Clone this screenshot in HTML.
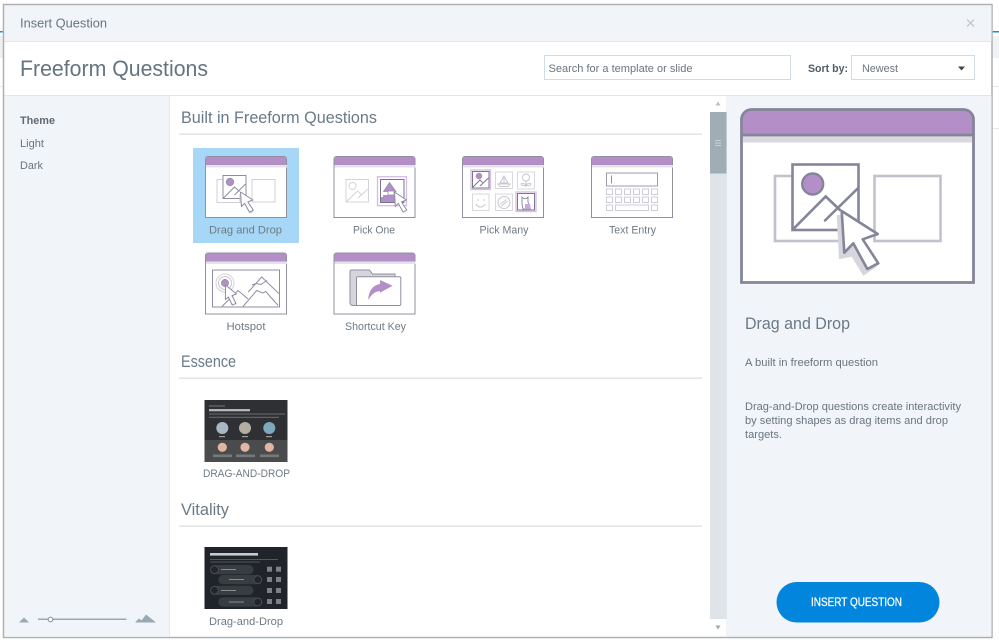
<!DOCTYPE html>
<html><head><meta charset="utf-8"><title>Insert Question</title>
<style>
html,body{margin:0;padding:0;background:#fff;width:999px;height:644px;overflow:hidden}
svg{display:block}
text{font-family:"Liberation Sans",sans-serif;fill:#69767f;font-size:11px}
.l{font-size:11px;fill:#6e7a84}
.h{font-size:16.5px;fill:#6a7a86}
</style></head><body>
<svg width="999" height="644" viewBox="0 0 999 644" xmlns="http://www.w3.org/2000/svg">
<defs>
<filter id="b" x="-5%" y="-5%" width="110%" height="110%"><feGaussianBlur stdDeviation="0.35"/></filter>
<g id="frame">
  <path d="M0.5 61.5V3a2.500 2.500 0 0 1 2.500-2.500h76a2.500 2.500 0 0 1 2.500 2.500V61.5Z" fill="#fff" stroke="#92909f" stroke-width="1"/>
  <rect x="1" y="9" width="81" height="2.500" fill="#e4e3e8"/>
  <path d="M1 9V3a2 2 0 0 1 2-2h76a2 2 0 0 1 2 2V9Z" fill="#b48fc7"/>
</g>
<g id="dd">
  <path d="M1.500 175V12a10 10 0 0 1 10-10h212a10 10 0 0 1 10 10V175Z" fill="#fff"/>
  <rect x="3" y="27" width="229" height="8" fill="#d9d9df"/>
  <path d="M1.500 27V12a10 10 0 0 1 10-10h212a10 10 0 0 1 10 10V27Z" fill="#b48fc7"/>
  <path d="M1.500 175V12a10 10 0 0 1 10-10h212a10 10 0 0 1 10 10V175ZM1.500 27.500H233.500" fill="none" stroke="#848599" stroke-width="2.800"/>
  <rect x="35" y="68.500" width="65" height="65" fill="none" stroke="#c2c2cc" stroke-width="2.600"/>
  <rect x="134.500" y="68.500" width="66" height="65" fill="none" stroke="#c2c2cc" stroke-width="2.600"/>
  <rect x="52.500" y="57" width="66" height="65.500" fill="#fff" stroke="#848599" stroke-width="2.600"/>
  <circle cx="72.700" cy="76.500" r="10.500" fill="#b48fc7" stroke="#848599" stroke-width="2.400"/>
  <path d="M53 121.800L85.700 89 100 102.500M85 113L118 80.700" fill="none" stroke="#848599" stroke-width="2.600" stroke-linecap="round"/>
  <path d="M96.700 107.500L102 107.500 105 145 113.300 135.800 127.300 161.500 138.300 158.200 123.300 168.200 111.700 149.200 99 151.800Z" fill="#d6d6dc"/>
  <path d="M101.700 103.500l36 23-15 5.300 15.600 24-11 5.700-14-25.700-9 9.400Z" fill="#fff" stroke="#848599" stroke-width="2.600" stroke-linejoin="round"/>
</g>
</defs>

<!-- outside page -->
<rect x="0" y="31" width="4" height="1.500" fill="#1b8fdc"/>
<rect x="992" y="31" width="7" height="1.500" fill="#1b8fdc"/>
<rect x="0" y="36" width="3" height="22" fill="#eef0f2"/>
<rect x="992" y="36" width="7" height="22" fill="#f1f2f4"/>
<rect x="992" y="86" width="7" height="1" fill="#e8e9eb"/>
<rect x="992" y="128" width="7" height="1" fill="#e8e9eb"/>
<rect x="0" y="86" width="3" height="1" fill="#e8e9eb"/>

<!-- dialog -->
<rect x="3.500" y="4.500" width="988.500" height="633" fill="#fff" stroke="#aeb0b1" stroke-width="1.500"/>
<rect x="4.500" y="5.500" width="987" height="36" fill="#f1f4f8"/>
<rect x="4.500" y="41" width="987" height="1" fill="#dfe6ec"/>
<rect x="4.500" y="95" width="987" height="1" fill="#dfe6ec"/>
<rect x="4.500" y="96" width="165" height="540" fill="#f1f4f8"/>
<rect x="169" y="96" width="1" height="540" fill="#e2e8ee"/>
<rect x="727" y="96" width="264.500" height="540.500" fill="#f1f4f8"/>
<rect x="726" y="96" width="1" height="540" fill="#e2e8ee"/>

<text x="20" y="27.500" style="font-size:13px" textLength="87" lengthAdjust="spacingAndGlyphs">Insert Question</text>
<path d="M967 19.500l7 7M974 19.500l-7 7" stroke="#c3c8cc" stroke-width="1.300" fill="none"/>
<text x="20" y="76" style="font-size:22.500px;fill:#64757f" textLength="188" lengthAdjust="spacingAndGlyphs">Freeform Questions</text>

<!-- search -->
<rect x="544.500" y="55.500" width="246" height="24" fill="#fff" stroke="#cfdbe5"/>
<text x="548.500" y="72" textLength="144" lengthAdjust="spacingAndGlyphs">Search for a template or slide</text>
<text x="808" y="72" style="fill:#4f5d67;font-weight:bold" textLength="40" lengthAdjust="spacingAndGlyphs">Sort by:</text>
<rect x="851.500" y="55.500" width="123" height="24" fill="#fff" stroke="#cfdbe5"/>
<text x="862" y="72" textLength="36" lengthAdjust="spacingAndGlyphs">Newest</text>
<path d="M958 66.500h7l-3.500 4Z" fill="#3d464c"/>

<!-- sidebar -->
<text x="20" y="124" style="font-weight:bold;fill:#5e6b75" textLength="35" lengthAdjust="spacingAndGlyphs">Theme</text>
<text x="20" y="147" textLength="24" lengthAdjust="spacingAndGlyphs">Light</text>
<text x="20" y="169" textLength="23" lengthAdjust="spacingAndGlyphs">Dark</text>
<path d="M19 622.500l5-5 5 5Z" fill="#9ba8b2"/>
<rect x="38" y="618.500" width="88.500" height="1.500" fill="#9ba8b2"/>
<circle cx="50.500" cy="619.500" r="2.300" fill="#fff" stroke="#8f9da8" stroke-width="1.200"/>
<path d="M135 622.500l4-4 2.500 2 4.500-6 10 8Z" fill="#9ba8b2"/>

<!-- scrollbar -->
<rect x="710" y="96" width="16.500" height="540" fill="#dfe4e9"/>
<rect x="710" y="96" width="16.500" height="16" fill="#fff"/>
<path d="M715.500 105.500l2.500-4 2.500 4Z" fill="#b5bfc6"/>
<rect x="710" y="112" width="16.500" height="61.500" fill="#a1adb4"/>
<path d="M715 140.500h6M715 143h6M715 145.500h6" stroke="#c9d1d6" stroke-width="1"/>
<rect x="710" y="619" width="16.500" height="17" fill="#fff"/>
<path d="M715.500 625.500h5l-2.500 4Z" fill="#9ba8b2"/>

<!-- sections -->
<text class="h" x="181" y="123" textLength="196" lengthAdjust="spacingAndGlyphs">Built in Freeform Questions</text>
<rect x="179" y="133.500" width="523" height="1.300" fill="#dedfe0"/>
<text class="h" x="181" y="367" textLength="55" lengthAdjust="spacingAndGlyphs">Essence</text>
<rect x="179" y="377.500" width="523" height="1.300" fill="#dedfe0"/>
<text class="h" x="181" y="515" textLength="48" lengthAdjust="spacingAndGlyphs">Vitality</text>
<rect x="179" y="525.500" width="523" height="1.300" fill="#dedfe0"/>

<!-- Drag and drop tile -->
<rect x="193" y="148" width="106" height="95" fill="#a6d7f6"/>
<use href="#frame" x="205" y="156"/>
<g fill="none" stroke="#8f8da3" stroke-width="1">
  <rect x="217" y="179.500" width="23" height="23" stroke="#d0d0d8"/>
  <rect x="252" y="179.500" width="23" height="22.500" stroke="#d0d0d8"/>
  <rect x="223" y="175.500" width="23" height="23" fill="#fff"/>
  <path d="M223.500 198l11-11 5 4.500M234.500 195l11-11"/>
</g>
<circle cx="230" cy="182" r="3.700" fill="#b48fc7" stroke="#8f8da3" stroke-width="0.800"/>
<path d="M239 194l2 13 3.500-3 5 9.500 4-1-6-11 5-2Z" fill="#d6d6dc"/>
<path d="M240.500 192l12.500 8-5.200 1.900 5.500 8.300-3.800 2-4.900-8.900-3.100 3.300Z" fill="#fff" stroke="#8f8da3" stroke-width="1" stroke-linejoin="round"/>
<text class="l" x="209" y="233.500" textLength="73" lengthAdjust="spacingAndGlyphs">Drag and Drop</text>

<!-- Pick One -->
<use href="#frame" x="333.500" y="156"/>
<g fill="none" stroke-width="1">
  <rect x="346" y="179.500" width="22.500" height="22.500" stroke="#d4d3da"/>
  <circle cx="352.500" cy="186" r="3.500" stroke="#d4d3da"/>
  <path d="M346.500 201.500l11-10.500 4.500 4M358 198l10-9" stroke="#d4d3da"/>
  <rect x="377.500" y="176.700" width="29" height="29" stroke="#d5bde2" stroke-width="1.300"/>
  <rect x="380.500" y="179.500" width="23.500" height="23" stroke="#77768e" fill="#fff"/>
</g>
<path d="M381 197h22v5h-22Z" fill="#b48fc7"/>
<rect x="383" y="195" width="15" height="6" fill="#b48fc7"/>
<path d="M389.500 182.500l-6 9h12.500Z" fill="#b48fc7" stroke="#8f8da3" stroke-width="0.700"/>
<path d="M388 191h6v4h-6Z" fill="#fff" stroke="#8f8da3" stroke-width="0.700"/>
<path d="M394.500 192l12 8-5 1.900 5.300 8.300-3.700 2-4.800-8.900-3 3.300Z" fill="#fff" stroke="#8f8da3" stroke-width="1" stroke-linejoin="round"/>
<text class="l" x="353" y="233.500" textLength="42" lengthAdjust="spacingAndGlyphs">Pick One</text>

<!-- Pick Many -->
<use href="#frame" x="462" y="156"/>
<g fill="none" stroke-width="1">
  <rect x="471" y="170" width="19.500" height="19.500" stroke="#d5bde2" stroke-width="1.300"/>
  <rect x="472.500" y="171.500" width="16.500" height="16.500" stroke="#77768e" fill="#fff"/>
  <path d="M473 187l7-7 2.500 2.500M480 186l8.500-8" stroke="#77768e"/>
  <rect x="495.500" y="172" width="17" height="16.500" stroke="#d9d8de"/>
  <path d="M498 184h12l-2 2.500h-8ZM504 176v8M504 176l-4 7h8Z" stroke="#c8c7d0"/>
  <rect x="517.500" y="172" width="17" height="17" stroke="#d9d8de"/>
  <circle cx="526" cy="177.500" r="3.500" stroke="#c8c7d0"/>
  <path d="M526 181v6M526 185c-2-2-4-1.500-5-1 1 2 3 2 5 1c2 1 4 1 5-1-1-.5-3-1-5 1" stroke="#c8c7d0"/>
  <rect x="472.500" y="194" width="16.500" height="16.500" stroke="#d9d8de"/>
  <path d="M478 199v2M484 199v2M476 204c2 4 7 4 9 0" stroke="#c8c7d0"/>
  <rect x="495.500" y="194" width="17" height="16.500" stroke="#d9d8de"/>
  <circle cx="504" cy="202.500" r="6" stroke="#c8c7d0"/>
  <path d="M500.500 204l6-4.500M501.500 206l6-5" stroke="#c8c7d0"/>
  <rect x="516" y="192" width="20" height="19.500" stroke="#d5bde2" stroke-width="1.300"/>
  <rect x="517.500" y="193.500" width="17" height="16.500" stroke="#77768e" fill="#fff"/>
</g>
<path d="M522 197l1.500 1.500h3l1.500-1.500v5l2 7h-7l-1-5Z" fill="#fff" stroke="#77768e" stroke-width="0.800"/>
<path d="M525 204h5l1 5.500h-6Z" fill="#c8a9d8"/>
<circle cx="479" cy="176" r="3" fill="#b48fc7" stroke="#8f8da3" stroke-width="0.500"/>
<text class="l" x="479.500" y="233.500" textLength="49" lengthAdjust="spacingAndGlyphs">Pick Many</text>

<!-- Text Entry -->
<use href="#frame" x="591" y="156"/>
<g fill="none" stroke="#cfced6" stroke-width="1">
  <rect x="606.500" y="173" width="51" height="13" stroke="#9d9bae"/>
  <path d="M611.500 175.500v8" stroke="#8f8da3"/>
  <rect x="606.500" y="189" width="6" height="5.500"/>
  <rect x="615.500" y="189" width="6" height="5.500"/>
  <rect x="624.500" y="189" width="6" height="5.500"/>
  <rect x="633.500" y="189" width="6" height="5.500"/>
  <rect x="642.500" y="189" width="6" height="5.500"/>
  <rect x="651.500" y="189" width="6" height="5.500"/>
  <rect x="606.500" y="197" width="6" height="5.500"/>
  <rect x="615.500" y="197" width="6" height="5.500"/>
  <rect x="624.500" y="197" width="6" height="5.500"/>
  <rect x="633.500" y="197" width="6" height="5.500"/>
  <rect x="642.500" y="197" width="6" height="5.500"/>
  <rect x="651.500" y="197" width="6" height="5.500"/>
  <rect x="606.500" y="205" width="6" height="5.500"/>
  <rect x="615.500" y="205" width="33" height="5.500"/>
  <rect x="651.500" y="205" width="6" height="5.500"/>
</g>
<text class="l" x="609" y="233.500" textLength="47" lengthAdjust="spacingAndGlyphs">Text Entry</text>

<!-- Hotspot -->
<use href="#frame" x="205" y="252.500"/>
<g fill="none" stroke="#8f8da3" stroke-width="1">
  <rect x="212.500" y="270" width="67" height="37"/>
  <path d="M222 306.500l16-16 10 8.500M248.300 292l13.400-15 17.300 16.700M252 285l4-1.500 5 1 6-4M243 306.500l13.700-16 6 2.500 3-1.500 12.500 14"/>
  <circle cx="225" cy="283" r="9" stroke="#d3d2da"/>
  <circle cx="225" cy="283" r="6.500" stroke="#c8c7d0"/>
</g>
<circle cx="225" cy="283" r="3.600" fill="#b48fc7" stroke="#8f8da3" stroke-width="0.700"/>
<path d="M225.500 285l11 9-4.500 1.500 4 8-3.800 1.500-3.800-8-3 2.500Z" fill="#fff" stroke="#8f8da3" stroke-width="1" stroke-linejoin="round"/>
<text class="l" x="226.500" y="330" textLength="39" lengthAdjust="spacingAndGlyphs">Hotspot</text>

<!-- Shortcut Key -->
<use href="#frame" x="333.500" y="252.500"/>
<path d="M350 271.500c0-.8.500-1.500 1.500-1.500h18l3 4h22.500v3h-38v28.500h-4c-2 0-3-1-3-3Z" fill="#d6d5dc" stroke="#8f8da3"/>
<path d="M356.500 305.500V278c0-.8.500-1.300 1.300-1.300h41.700c.8 0 1.300.5 1.300 1.300v26c0 1-.5 1.500-1.500 1.500Z" fill="#fff" stroke="#8f8da3"/>
<path d="M368.300 300c.2-9 4.700-15 11.700-16v-4l12.700 5.700-12.700 7v-1.500c-5 0-8.500 3-11.700 8.800Z" fill="#b48fc7"/>
<text class="l" x="345" y="330" textLength="61" lengthAdjust="spacingAndGlyphs">Shortcut Key</text>

<!-- Essence thumb -->
<rect x="204.500" y="400" width="83" height="62" fill="#2f3034"/>
<g filter="url(#b)">
<rect x="204.500" y="440" width="83" height="22" fill="#4a4b4e"/>
<rect x="209" y="405.500" width="16" height="1" fill="#77787a"/>
<rect x="209" y="409" width="41" height="2.300" fill="#b5b5b6"/>
<rect x="209" y="413.500" width="76" height="1" fill="#6b6c6f"/>
<rect x="209" y="416.800" width="70" height="1" fill="#6b6c6f"/>
<circle cx="222.300" cy="428" r="6" fill="#a7b7c5"/>
<circle cx="245" cy="428" r="6" fill="#b3aea0"/>
<circle cx="269.300" cy="428" r="6" fill="#7fa7bd"/>
<rect x="219" y="436" width="6" height="1.200" fill="#9a9a9b"/>
<rect x="242" y="436" width="6" height="1.200" fill="#9a9a9b"/>
<rect x="266" y="436" width="6" height="1.200" fill="#9a9a9b"/>
<circle cx="222.300" cy="447.300" r="4.600" fill="#e2b5a2"/>
<circle cx="245" cy="447.300" r="4.600" fill="#e2b5a2"/>
<circle cx="269.300" cy="447.300" r="4.600" fill="#e2b5a2"/>
<rect x="213" y="454.500" width="19" height="2.600" fill="#77787a"/>
<rect x="236" y="454.500" width="19" height="2.600" fill="#77787a"/>
<rect x="260" y="454.500" width="19" height="2.600" fill="#77787a"/>
</g>
<text class="l" x="203" y="477" textLength="87" lengthAdjust="spacingAndGlyphs">DRAG-AND-DROP</text>

<!-- Vitality thumb -->
<rect x="204.500" y="547" width="83" height="62" fill="#20232a"/>
<g filter="url(#b)">
<rect x="210" y="553" width="48" height="2.600" fill="#c9cacc"/>
<rect x="210" y="559" width="68" height="1" fill="#54575c"/>
<rect x="210" y="561.500" width="50" height="1" fill="#54575c"/>
<g fill="#393c42">
  <rect x="210" y="565" width="43.500" height="9.300" rx="4.600"/>
  <rect x="218.300" y="575" width="44" height="9.300" rx="4.600"/>
  <rect x="210" y="585.700" width="43.500" height="9.300" rx="4.600"/>
  <rect x="218.300" y="597.300" width="44" height="9.300" rx="4.600"/>
</g>
<g fill="#24262c" stroke="#55585d" stroke-width="0.600">
  <circle cx="214.500" cy="569.600" r="3.800"/>
  <circle cx="257.700" cy="579.600" r="3.800"/>
  <circle cx="214.500" cy="590.300" r="3.800"/>
  <circle cx="257.700" cy="602" r="3.800"/>
</g>
<g fill="#8a8c90">
  <rect x="221" y="569" width="15" height="1"/><rect x="229" y="579" width="15" height="1"/>
  <rect x="221" y="590" width="15" height="1"/><rect x="229" y="601.500" width="15" height="1"/>
</g>
<g fill="#7d8085">
  <rect x="267" y="566.700" width="5" height="5"/><rect x="276" y="566.700" width="5" height="5"/>
  <rect x="267" y="577" width="5" height="5"/><rect x="276" y="577" width="5" height="5"/>
  <rect x="267" y="588" width="5" height="5"/><rect x="276" y="588" width="5" height="5"/>
  <rect x="267" y="599" width="5" height="5"/><rect x="276" y="599" width="5" height="5"/>
</g>
</g>
<text class="l" x="209" y="625" textLength="74" lengthAdjust="spacingAndGlyphs">Drag-and-Drop</text>

<!-- preview -->
<use href="#dd" x="740" y="107.500"/>
<text x="745" y="329" style="font-size:16.500px;fill:#6a7a86" textLength="105" lengthAdjust="spacingAndGlyphs">Drag and Drop</text>
<text x="745" y="366" textLength="133" lengthAdjust="spacingAndGlyphs">A built in freeform question</text>
<text x="745" y="410" textLength="216" lengthAdjust="spacingAndGlyphs">Drag-and-Drop questions create interactivity</text>
<text x="745" y="424" textLength="203" lengthAdjust="spacingAndGlyphs">by setting shapes as drag items and drop</text>
<text x="745" y="438" textLength="37" lengthAdjust="spacingAndGlyphs">targets.</text>

<!-- button -->
<rect x="776.500" y="582" width="163" height="40.500" rx="20.250" fill="#0285dc"/>
<text x="811" y="606" style="fill:#fff;font-size:11.500px;stroke:#fff;stroke-width:.25px" textLength="91" lengthAdjust="spacingAndGlyphs">INSERT QUESTION</text>
</svg>
</body></html>
